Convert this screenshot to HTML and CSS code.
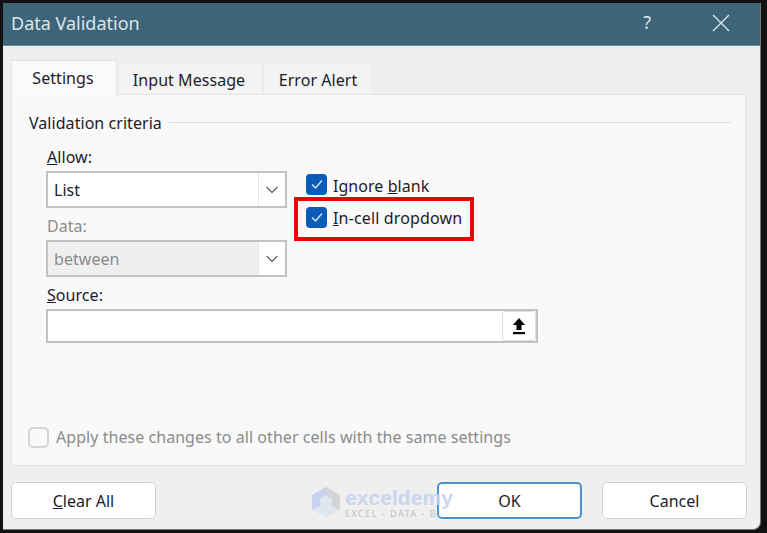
FILE: index.html
```html
<!DOCTYPE html>
<html lang="en">
<head>
<meta charset="utf-8">
<title>Data Validation</title>
<link rel="stylesheet" href="styles.css">
</head>
<body>
<div class="dialog">
  <header class="titlebar">
    <span class="title">Data Validation</span>
    <span class="help">?</span>
    <svg class="close" width="18" height="18" viewBox="0 0 18 18"><path d="M1 1L17 17M17 1L1 17" stroke="#dfe7ec" stroke-width="1.3" fill="none"/></svg>
  </header>
  <main class="content">
    <nav class="tabs">
      <div class="tab active">Settings</div>
      <div class="tab tab-input">Input Message</div>
      <div class="tab tab-error">Error Alert</div>
    </nav>
    <section class="panel">
      <div class="legend"><span>Validation criteria</span><i class="rule"></i></div>
      <div class="form-top">
        <div class="col-left">
          <div class="label label-allow"><u>A</u>llow:</div>
          <div class="combo"><span class="combo-value">List</span><span class="arrow"><svg width="14" height="8" viewBox="0 0 14 8"><path d="M1.5 1L7 6.5L12.5 1" stroke="#555" stroke-width="1.1" fill="none"/></svg></span></div>
          <div class="label label-data disabled">Data:</div>
          <div class="combo combo-disabled"><span class="combo-value">between</span><span class="arrow"><svg width="14" height="8" viewBox="0 0 14 8"><path d="M1.5 1L7 6.5L12.5 1" stroke="#555" stroke-width="1.1" fill="none"/></svg></span></div>
        </div>
        <div class="col-right">
          <label class="check-row">
            <span class="check"><svg width="14" height="12" viewBox="0 0 14 12"><path d="M2 6.5L5.5 10L12 2.5" stroke="#d8e6f5" stroke-width="1.4" fill="none"/></svg></span>
            <span class="check-text">Ignore <u>b</u>lank</span>
          </label>
          <label class="check-row row-second">
            <span class="check"><svg width="14" height="12" viewBox="0 0 14 12"><path d="M2 6.5L5.5 10L12 2.5" stroke="#d8e6f5" stroke-width="1.4" fill="none"/></svg></span>
            <span class="check-text check-text-second"><u>I</u>n-cell dropdown</span>
          </label>
        </div>
      </div>
      <div class="label label-source"><u>S</u>ource:</div>
      <div class="source">
        <span class="ref-btn"><svg width="14" height="18" viewBox="0 0 14 18"><path d="M7 1L13 8H9.5V13H4.5V8H1Z" fill="#000"/><rect x="1" y="15" width="12" height="2.2" fill="#000"/></svg></span>
      </div>
      <label class="apply"><span class="check-empty"></span><span>Apply these changes to all other cells with the same settings</span></label>
    </section>
    <footer class="buttons">
      <button class="btn"><u>C</u>lear All</button>
      <div class="right-btns">
        <button class="btn btn-ok">OK</button>
        <button class="btn">Cancel</button>
      </div>
    </footer>
  </main>
  <div class="highlight"></div>
  <div class="watermark">
    <svg width="30" height="32" viewBox="0 0 30 32"><path d="M15 1L29 9V24L15 31L1 24V9Z" fill="#dfe6ee"/><path d="M15 1L1 9V24L9 20V13L15 9Z" fill="#c3d0ee"/><path d="M15 1L29 9V24L21 20V13L15 9Z" fill="#cfd2d6"/></svg>
    <div class="wm-text"><span class="wm-name">exceldemy</span><span class="wm-sub">EXCEL - DATA - BI</span></div>
  </div>
</div>
</body>
</html>
```

FILE: styles.css
```css
* { box-sizing: border-box; }
html, body { margin: 0; padding: 0; width: 767px; height: 533px; overflow: hidden; background: #111; }
body { padding: 3px 6px 3px 3px; font-family: "Noto Sans", "Open Sans", sans-serif; font-size: 16px; letter-spacing: 0.05px; color: #1c1c2a; }
.dialog { position: relative; width: 758px; height: 527px; background: #efefef; display: flex; flex-direction: column; border-right: 1px solid #6f7a80; border-bottom: 1px solid #6f7a80; border-bottom-right-radius: 8px; overflow: hidden; }
.titlebar { height: 43px; flex: none; background: #3e6478; display: flex; align-items: center; padding: 0 30px 0 8px; color: #dbe5ea; border-bottom: 1px solid #6c8c9c; }
.title { font-size: 18px; flex: 1; margin-top: -2px; letter-spacing: 0; }
.help { font-size: 18px; margin-right: 61px; margin-top: -4px; }
.close { margin-top: -2px; }
.content { flex: 1; display: flex; flex-direction: column; padding: 14px 13px 11px 8px; min-height: 0; }
.tabs { display: flex; align-items: flex-end; height: 34px; flex: none; gap: 1px; position: relative; z-index: 1; }
.tab { height: 32px; background: #f3f3f3; border: 1px solid #eaeaea; border-bottom: 0; display: flex; align-items: center; justify-content: center; padding: 2px 2px 0 0; }
.tab.active { width: 106px; height: 35px; background: #fafafa; border-color: #e3e3e3; margin-bottom: -1px; padding: 0 2px 1px 0; }
.tab-input { width: 144px; }
.tab-error { width: 110px; padding-right: 0; }
.panel { width: 735px; height: 372px; flex: none; background: #f9f9f9; border: 1px solid #e4e4e4; padding: 15px 14px 0 17px; }
.legend { display: flex; align-items: center; gap: 7px; height: 24px; }
.legend span { padding-top: 2px; }
.rule { flex: 1; height: 1px; background: #dcdcdc; }
.form-top { display: flex; }
.col-left { width: 241px; margin-left: 18px; flex: none; }
.label { height: 24px; line-height: 24px; }
.label-allow { margin-top: 11px; }
.label-data { margin-top: 6px; }
.label-source { margin-top: 6px; margin-left: 18px; }
.disabled { color: #8b8b8b; }
.combo { height: 37px; width: 241px; margin-top: 2px; margin-left: -1px; background: #fff; border: 2px solid #c2c2c4; display: flex; align-items: center; justify-content: space-between; }
.combo-value { padding-left: 6px; }
.arrow { width: 27px; height: 33px; background: #fff; border-left: 1px solid #e6e6e6; display: flex; align-items: center; justify-content: center; }
.combo-disabled { background: #efefef; color: #8b8b8b; }
.col-right { margin-left: 18px; padding-top: 39px; }
.check-row { display: flex; align-items: center; gap: 6px; height: 22px; }
.check-text { padding-top: 3px; }
.check-text-second { padding-top: 1px; letter-spacing: 0.15px; }
.row-second { margin-top: 11px; }
.check { width: 21px; height: 21px; border-radius: 4px; background: #0a5cb8; display: flex; align-items: center; justify-content: center; }
.source { margin-left: 17px; margin-top: 2px; width: 492px; height: 34px; background: #fff; border: 2px solid #c2c2c4; display: flex; justify-content: flex-end; }
.ref-btn { width: 34px; height: 30px; background: #fff; border: 1px solid #dedede; border-radius: 3px; display: flex; align-items: center; justify-content: center; }
.apply { display: flex; align-items: center; gap: 7px; margin-top: 83px; height: 22px; color: #8b8b8b; }
.check-empty { width: 21px; height: 21px; border: 2px solid #d4d4d4; border-radius: 5px; background: #f9f9f9; margin-left: -1px; }
.buttons { display: flex; justify-content: space-between; margin-top: 16px; }
.right-btns { display: flex; gap: 20px; }
.btn { width: 145px; height: 37px; background: #fff; border: 1px solid #d2d2d2; border-radius: 5px; font: inherit; color: inherit; padding: 0; }
.btn-ok { border: 2px solid #4a90cc; }
.highlight { position: absolute; left: 291px; top: 194px; width: 180px; height: 44px; border: 4px solid #f00000; pointer-events: none; }
.watermark { position: absolute; left: 308px; top: 483px; display: flex; align-items: center; gap: 4px; opacity: .9; }
.wm-text { display: flex; flex-direction: column; line-height: 1; }
.wm-name { font-family: "Liberation Sans", sans-serif; font-size: 21px; font-weight: 700; color: #c6d3ee; }
.wm-sub { font-size: 9px; letter-spacing: 1.5px; color: #b9bcc2; margin-top: 1px; }
```
